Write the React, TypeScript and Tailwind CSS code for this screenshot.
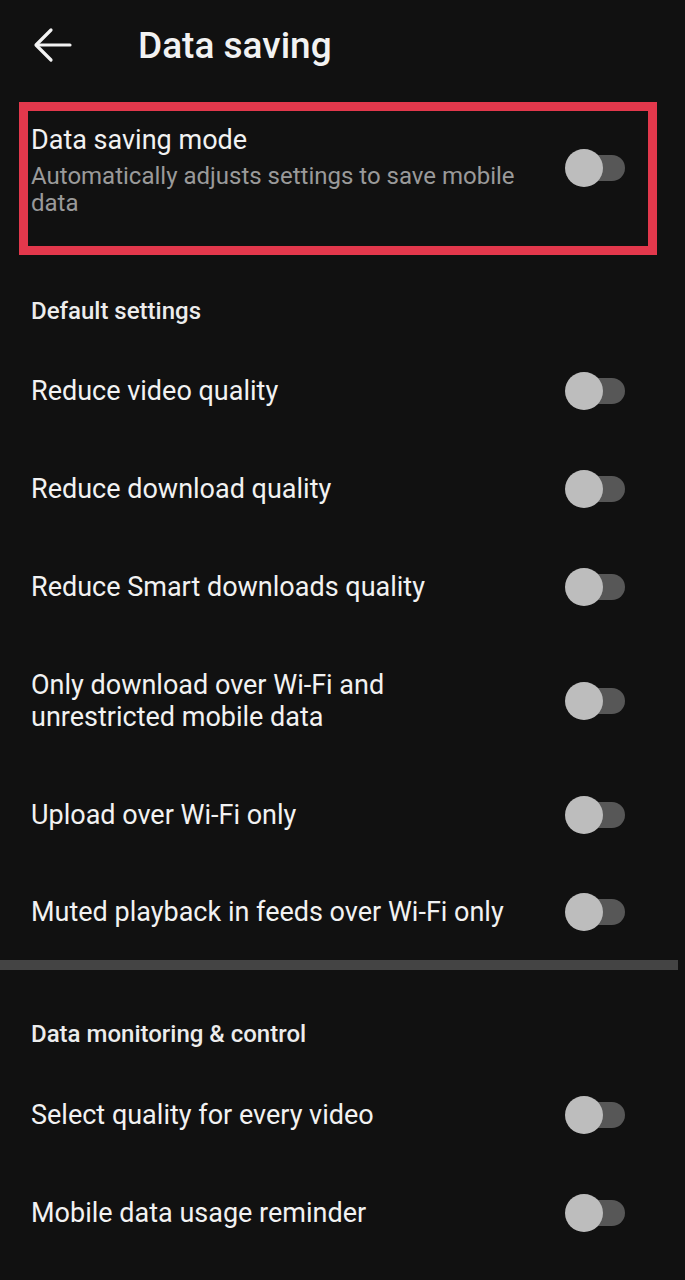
import React from 'react';

const Toggle: React.FC = () => (
  <div className="relative w-[60px] h-[38px] shrink-0">
    <div className="absolute left-[18px] top-[6px] w-[42px] h-[26px] rounded-full bg-[#575757]" />
    <div className="absolute left-0 top-0 w-[38px] h-[38px] rounded-full bg-[#bdbdbd]" />
  </div>
);

interface RowProps {
  label: React.ReactNode;
  h?: string;
}

const Row: React.FC<RowProps> = ({ label, h = 'h-[98px]' }) => (
  <div className={`flex items-center justify-between pl-[31px] pr-[60px] ${h}`}>
    <div className="text-[27px] leading-[32px] text-[#f2f2f2]">{label}</div>
    <Toggle />
  </div>
);

export default function App() {
  return (
    <div
      className="w-[685px] min-h-[1280px] bg-[#111111] text-white overflow-hidden"
      style={{ fontFamily: 'Roboto, "Noto Sans", sans-serif' }}
    >
      {/* header */}
      <div className="flex items-center h-[90px]">
        <svg width="40" height="40" viewBox="0 0 40 40" className="ml-[33px]" fill="none" stroke="#f2f2f2" strokeWidth="3.2" strokeLinecap="round" strokeLinejoin="round">
          <path d="M37 20H4" />
          <path d="M18 5L3 20L18 35" />
        </svg>
        <h1 className="ml-[65px] text-[37px] font-medium text-[#f2f2f2] leading-none">Data saving</h1>
      </div>

      {/* highlighted item */}
      <div className="mt-[12px] ml-[19px] w-[638px] h-[153px] border-[9px] border-[#e3384c] flex items-start justify-between pl-[3px] pr-[23px] pt-[13px]">
        <div className="w-[500px]">
          <div className="text-[27px] leading-[32px] text-[#f2f2f2]">Data saving mode</div>
          <div className="text-[24px] leading-[27px] text-[#9a9a9a] mt-[7px]">
            Automatically adjusts settings to save mobile data
          </div>
        </div>
        <div className="mt-[25px]">
          <Toggle />
        </div>
      </div>

      <div className="mt-[41px] mb-[16px] pl-[31px] h-[30px] leading-[30px] text-[24px] font-medium text-[#ececec]">
        Default settings
      </div>

      <Row label="Reduce video quality" />
      <Row label="Reduce download quality" />
      <Row label="Reduce Smart downloads quality" />
      <Row
        h="h-[130px]"
        label={
          <>
            Only download over Wi-Fi and
            <br />
            unrestricted mobile data
          </>
        }
      />
      <Row label="Upload over Wi-Fi only" />
      <Row label="Muted playback in feeds over Wi-Fi only" h="h-[96px]" />

      <div className="h-[10px] w-[678px] bg-[#444444]" />

      <div className="mt-[49px] mb-[17px] pl-[31px] h-[30px] leading-[30px] text-[24px] font-medium text-[#ececec]">
        Data monitoring &amp; control
      </div>
      <Row label="Select quality for every video" />
      <Row label="Mobile data usage reminder" />
    </div>
  );
}
